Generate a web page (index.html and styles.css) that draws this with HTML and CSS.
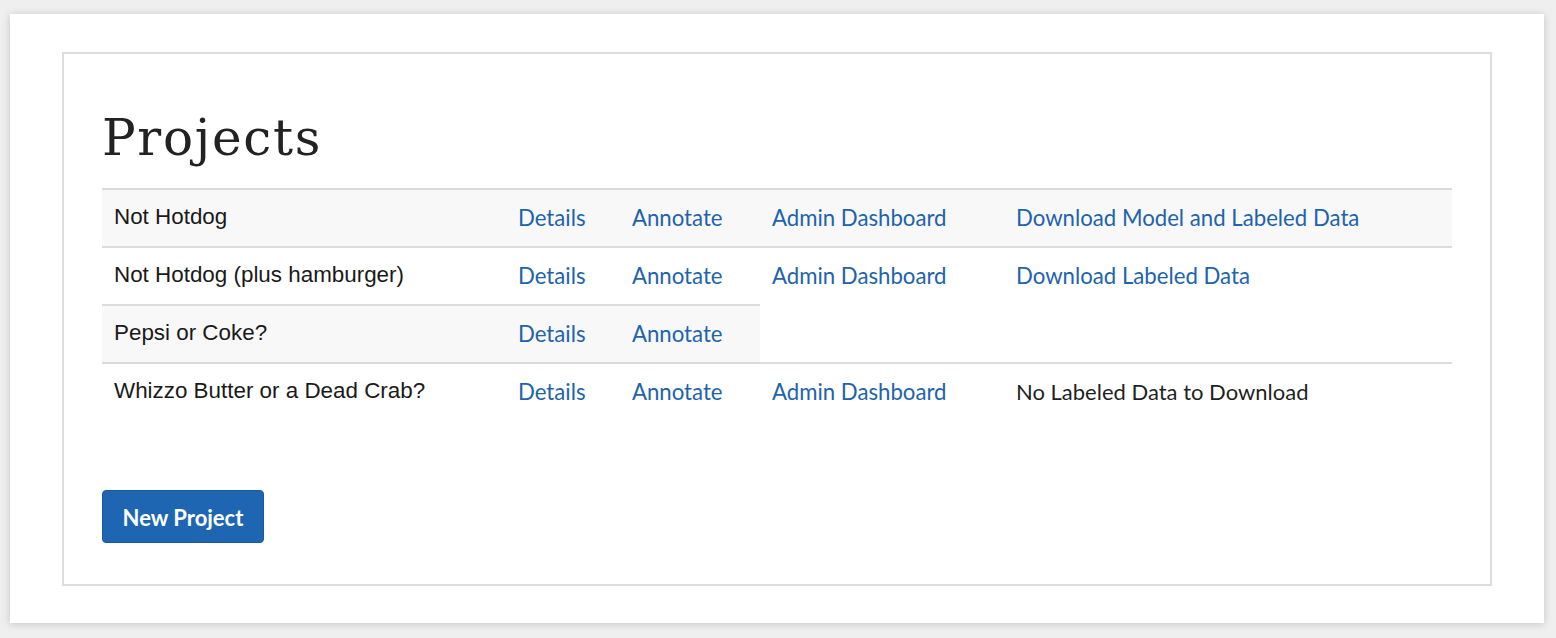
FILE: index.html
```html
<!DOCTYPE html>
<html>
<head>
<meta charset="utf-8">
<title>Projects</title>
<link rel="stylesheet" href="styles.css">
</head>
<body>
<div class="card">
  <div class="panel">
    <h1 class="title">Projects</h1>
    <table class="projects">
      <colgroup>
        <col class="c-name"><col class="c-details"><col class="c-annotate"><col class="c-admin"><col class="c-download">
      </colgroup>
      <tbody>
        <tr class="striped">
          <td class="name">Not Hotdog</td>
          <td><a href="#">Details</a></td>
          <td><a href="#">Annotate</a></td>
          <td><a href="#">Admin Dashboard</a></td>
          <td><a href="#">Download Model and Labeled Data</a></td>
        </tr>
        <tr>
          <td class="name">Not Hotdog (plus hamburger)</td>
          <td><a href="#">Details</a></td>
          <td><a href="#">Annotate</a></td>
          <td rowspan="2" class="plain"><a href="#">Admin Dashboard</a></td>
          <td rowspan="2" class="plain"><a href="#">Download Labeled Data</a></td>
        </tr>
        <tr class="striped">
          <td class="name">Pepsi or Coke?</td>
          <td><a href="#">Details</a></td>
          <td><a href="#">Annotate</a></td>
        </tr>
        <tr>
          <td class="name">Whizzo Butter or a Dead Crab?</td>
          <td><a href="#">Details</a></td>
          <td><a href="#">Annotate</a></td>
          <td><a href="#">Admin Dashboard</a></td>
          <td class="note">No Labeled Data to Download</td>
        </tr>
      </tbody>
    </table>
    <button class="btn-primary" type="button">New Project</button>
  </div>
</div>
</body>
</html>
```

FILE: styles.css
```css
html, body {
  margin: 0;
  padding: 0;
}
body {
  background: #efefef;
  padding: 14px 12px 15px 10px;
  font-family: "Lato", "Liberation Sans", sans-serif;
}
.card {
  background: #fff;
  height: 609px;
  box-sizing: border-box;
  padding: 38px 52px 37px 52px;
  box-shadow: 0 1px 8px rgba(0, 0, 0, 0.18);
}
.panel {
  border: 2px solid #dcdcdc;
  height: 534px;
  box-sizing: border-box;
  padding: 38px 38px 0 38px;
}
.title {
  margin: 0;
  height: 96px;
  box-sizing: border-box;
  padding-top: 18px;
  font-family: "DejaVu Serif", "Liberation Serif", serif;
  font-weight: normal;
  font-size: 50px;
  letter-spacing: 1.7px;
  line-height: 56px;
  color: #222;
}
.projects {
  width: 1350px;
  table-layout: fixed;
  border-collapse: collapse;
  margin-bottom: 70px;
}
.c-name { width: 404px; }
.c-details { width: 114px; }
.c-annotate { width: 140px; }
.c-admin { width: 244px; }
.c-download { width: 448px; }
.projects td {
  border-top: 2px solid #dcdcdc;
  padding: 16px 12px 16px 12px;
  line-height: 24px;
  font-size: 22.2px;
  vertical-align: top;
  white-space: nowrap;
  color: #222;
}
.projects tr.striped td {
  background: #f8f8f8;
}
.projects td.plain {
  background: #fff;
}
.projects td.name {
  font-family: "Liberation Sans", Arial, sans-serif;
  font-size: 22.4px;
  color: #1a1a1a;
  padding-top: 15px;
  padding-bottom: 17px;
}
.projects a {
  color: #1d63ad;
  text-decoration: none;
}
.projects td.note {
  color: #1f1f1f;
  font-size: 22px;
}
.btn-primary {
  display: block;
  width: 162px;
  height: 53px;
  padding: 2px 0 0 0;
  background: #1e66b2;
  border: 1px solid #1a5a9c;
  border-radius: 4px;
  color: #fff;
  font-family: "Lato", sans-serif;
  font-weight: bold;
  font-size: 22px;
  cursor: pointer;
}
```
